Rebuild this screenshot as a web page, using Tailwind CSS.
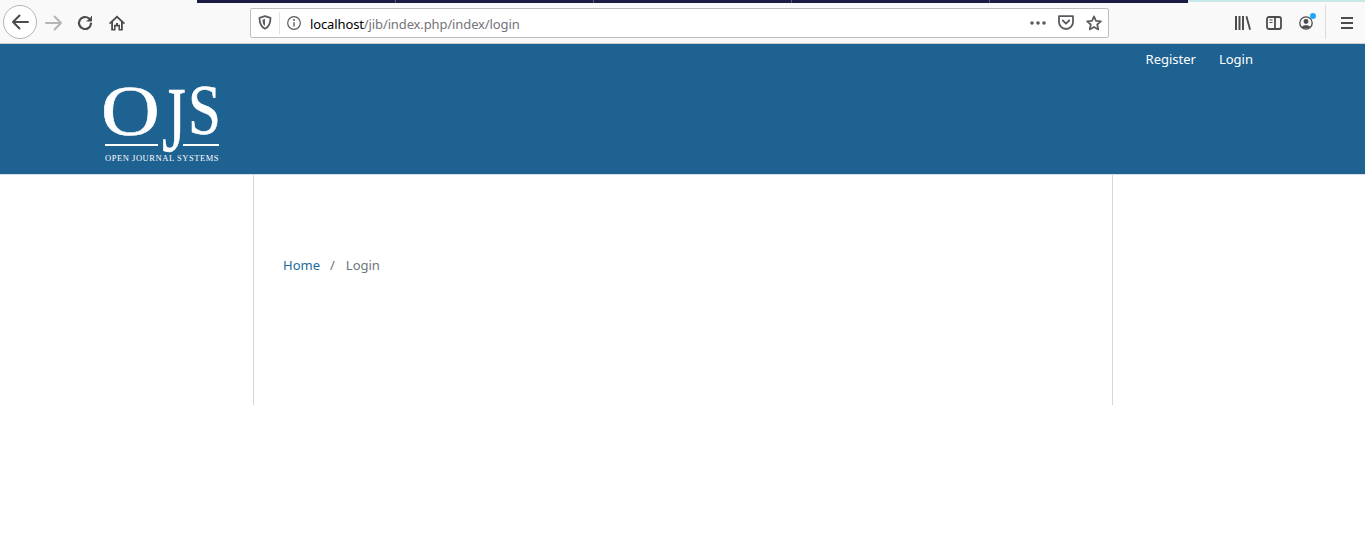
<!DOCTYPE html>
<html lang="en">
<head>
<meta charset="utf-8">
<title>Login</title>
<script src="https://cdn.jsdelivr.net/npm/@tailwindcss/browser@4"></script>
</head>
<body class="bg-white font-['Noto_Sans',sans-serif] h-[552px] overflow-hidden">
<div class="h-[44px] bg-[#f9f9fa] border-b border-[#d0d0d0] relative">
  <div class="absolute top-0 left-[197px] w-[991px] h-[3px] bg-[#1c1b41] flex">
    <span class="w-[199px] h-full border-r border-[#55556f]"></span>
    <span class="w-[198px] h-full border-r border-[#55556f]"></span>
    <span class="w-[198px] h-full border-r border-[#55556f]"></span>
    <span class="w-[198px] h-full border-r border-[#55556f]"></span>
  </div>
  <div class="absolute top-0 left-[1188px] right-0 h-[2px] bg-[#c9e8ea]"></div>
  <div class="flex items-center h-full pl-[3px] pt-[2px]">
    <button class="w-[34px] h-[34px] -mt-[1px] rounded-full border border-[#b4b4b4] bg-white flex items-center justify-center">
      <svg width="18" height="16" viewBox="0 0 18 16" fill="none" stroke="#4c4c4f" stroke-width="2" stroke-linecap="round" stroke-linejoin="round"><path d="M2 8h15M8.500 1.500 2 8l6.500 6.500"/></svg>
    </button>
    <svg class="ml-[8px]" width="18" height="16" viewBox="0 0 18 16" fill="none" stroke="#b5b5b6" stroke-width="2" stroke-linecap="round" stroke-linejoin="round"><path d="M1 8h15M9.500 1.500 16 8l-6.500 6.500"/></svg>
    <svg class="ml-[14px]" width="16" height="16" viewBox="0 0 16 16" fill="none" stroke="#4c4c4f" stroke-width="2.200" stroke-linecap="round" stroke-linejoin="round"><path d="M14 8.500A6 6 0 1 1 12 3.500L14 5"/><path d="M14.500 1.500v4.500H10" fill="#4c4c4f" stroke-width="1"/></svg>
    <svg class="ml-[16px]" width="16" height="16" viewBox="0 0 16 16"><path d="M8 .5 0 8l1 1.200 1.200-1V15.500h4.300v-4h3v4h4.300V8.200l1.200 1 1-1.200zM4 6.800 8 3l4 3.800V14h-1V9.800H5V14H4z" fill="#4c4c4f"/><rect x="7" y="8" width="2" height="2" fill="#4c4c4f"/></svg>
    <div class="ml-[125px] w-[859px] h-[30px] bg-white border border-[#bebebe] rounded-[2px] flex items-center">
      <svg class="ml-[7px]" width="14" height="15" viewBox="0 0 14 15" fill="none"><path d="M7 1.200 1.500 2.800c0 5 1 9 5.500 11 4.500-2 5.500-6 5.500-11z" stroke="#5b5b5f" stroke-width="1.800" stroke-linejoin="round"/><path d="M7 4 4.500 4.800C4.500 7.500 5 10 7 11z" fill="#5b5b5f"/></svg>
      <span class="ml-[7px] w-px h-[22px] bg-[#e2e2e3]"></span>
      <svg class="ml-[7px]" width="14" height="14" viewBox="0 0 14 14" fill="none"><circle cx="7" cy="7" r="6.300" stroke="#5b5b5f" stroke-width="1.200"/><path d="M7 6.200V10.500" stroke="#5b5b5f" stroke-width="1.400"/><circle cx="7" cy="4" r="1" fill="#5b5b5f"/></svg>
      <span class="ml-[9px] mt-[4px] text-[13px] leading-none text-[#74747a] tracking-[-0.12px]"><span class="text-black">localhost</span>/jib/index.php/index/login</span>
      <div class="ml-auto flex items-center">
        <svg width="16" height="4" viewBox="0 0 16 4" fill="#5b5b5f"><circle cx="2" cy="2" r="1.800"/><circle cx="8" cy="2" r="1.800"/><circle cx="14" cy="2" r="1.800"/></svg>
        <svg class="ml-[12px]" width="16" height="15" viewBox="0 0 16 15" fill="none" stroke="#5b5b5f" stroke-width="1.800" stroke-linejoin="round" stroke-linecap="round"><path d="M1 1.200h14V7a7 7 0 0 1-14 0z"/><path d="M4.800 5.500 8 8.600l3.200-3.100"/></svg>
        <svg class="ml-[12px] mr-[6px]" width="16" height="16" viewBox="0 0 16 16" fill="none" stroke="#5b5b5f" stroke-width="1.700" stroke-linejoin="round"><path d="M8 1.300 10 5.800l4.900.5-3.700 3.200 1.100 4.900L8 11.900l-4.300 2.500 1.100-4.900L1.100 6.300 6 5.800z"/></svg>
      </div>
    </div>
    <svg class="ml-[126px]" width="16" height="14" viewBox="0 0 16 14" fill="#4c4c4f"><rect x="0" y="0" width="2" height="14"/><rect x="3.500" y="0" width="2" height="14"/><rect x="7" y="0" width="2" height="14"/><path d="M10.500.5 12.300 0 16 13.500l-1.800.5z"/></svg>
    <svg class="ml-[15px]" width="16" height="14" viewBox="0 0 16 14" fill="none"><rect x="1" y="1" width="14" height="12" rx="2" stroke="#4c4c4f" stroke-width="1.800"/><path d="M9 1v12" stroke="#4c4c4f" stroke-width="1.800"/><path d="M3.500 4h3M3.500 6.500h3" stroke="#4c4c4f" stroke-width="1.200"/></svg>
    <div class="ml-[17px] relative w-[14px] h-[14px]">
      <svg width="14" height="14" viewBox="0 0 14 14" fill="none"><circle cx="7" cy="7" r="6.200" stroke="#4c4c4f" stroke-width="1.300"/><circle cx="7" cy="5.500" r="2.400" fill="#4c4c4f"/><path d="M2.800 11c1-2.200 7.400-2.200 8.400 0-1.500 2-6.900 2-8.400 0z" fill="#4c4c4f"/></svg>
      <span class="absolute top-[-3px] right-[-3px] w-[6px] h-[6px] rounded-full bg-[#1fa8f5]"></span>
    </div>
    <span class="ml-[12px] w-px h-[34px] -mt-[2px] bg-[#dcdcdc]"></span>
    <svg class="ml-[15px]" width="12" height="12" viewBox="0 0 12 12" fill="#4c4c4f"><rect y="0" width="12" height="2"/><rect y="5" width="12" height="2"/><rect y="10" width="12" height="2"/></svg>
  </div>
</div>
<header class="h-[131px] bg-[#1e6292] border-b border-[#d6e0e8] relative">
  <nav class="flex justify-end gap-[23px] pr-[112px] pt-[6px] text-[13px] leading-[19px] text-white">
    <a>Register</a><a>Login</a>
  </nav>
  <div class="absolute left-[103px] top-[36px] w-[118px] h-[85px] text-white font-['Liberation_Serif',serif]">
    <span class="absolute left-[-2px] top-[-5px] text-[72px] leading-[72px] origin-top-left scale-x-[1.13] [-webkit-text-stroke:0.6px_white]">O</span>
    <span class="absolute left-[57px] top-[-7px] text-[72px] leading-[72px] origin-top scale-x-[0.85] scale-y-[1.3] [-webkit-text-stroke:0.4px_white]">J</span>
    <span class="absolute left-[85px] top-[-6px] text-[72px] leading-[72px] origin-top-left scale-x-[0.82] [-webkit-text-stroke:0.6px_white]">S</span>
    <span class="absolute left-[2px] top-[64px] w-[53px] h-[2px] bg-white"></span>
    <span class="absolute left-[80px] top-[64px] w-[36px] h-[2px] bg-white"></span>
    <span class="absolute left-[2px] top-[73px] text-[8.5px] leading-[10px] whitespace-nowrap tracking-[0.55px]">OPEN JOURNAL SYSTEMS</span>
  </div>
</header>
<main class="ml-[253px] w-[860px] h-[230px] border-x border-[#d7d7d7] pt-[81px] pl-[29px]">
  <div class="flex items-center text-[13px] leading-[19px]">
    <a class="text-[#1b6aa0]">Home</a><span class="ml-[10px] mr-[11px] text-[#6c757d]">/</span><span class="text-[#6c757d]">Login</span>
  </div>
</main>
</body>
</html>
